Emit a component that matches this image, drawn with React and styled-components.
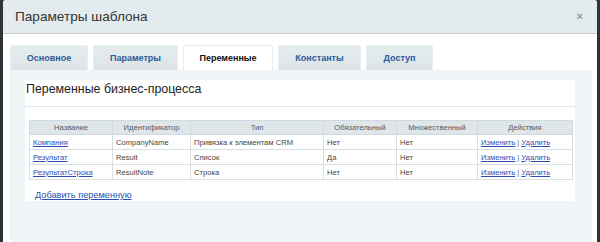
import React from "react";
import styled, { createGlobalStyle } from "styled-components";

const Global = createGlobalStyle`
  html, body { margin: 0; padding: 0; }
  body {
    background: #2f3437;
    font-family: "Liberation Sans", Arial, sans-serif;
    width: 600px;
    height: 242px;
    overflow: hidden;
  }
`;

const Dialog = styled.div`
  margin: 0 3px;
  height: 242px;
  background: #fff;
  border-radius: 3px 3px 0 0;
  overflow: hidden;
  display: flex;
  flex-direction: column;
`;

const Header = styled.div`
  height: 33px;
  flex: none;
  background: #e4ebee;
  border-bottom: 1px solid #c6ced2;
  display: flex;
  align-items: center;
  justify-content: space-between;
  padding: 0 14px 0 12px;
`;

const Title = styled.div`
  font-size: 13.6px;
  color: #333;
`;

const Close = styled.span`
  font-size: 11px;
  font-weight: bold;
  color: #8a9397;
  line-height: 1;
`;

const Body = styled.div`
  flex: 1;
  padding: 11px 5px 0 7px;
  display: flex;
  flex-direction: column;
`;

const Tabs = styled.div`
  display: flex;
  gap: 5px;
  height: 25px;
`;

const Tab = styled.div`
  width: ${(p) => p.$w}px;
  box-sizing: border-box;
  display: flex;
  align-items: center;
  justify-content: center;
  font-size: 9px;
  font-weight: bold;
  color: ${(p) => (p.$active ? "#111" : "#2c5a9c")};
  background: ${(p) =>
    p.$active ? "#fff" : "linear-gradient(#e5ecee, #dce4e7)"};
  border: 1px solid ${(p) => (p.$active ? "#e6ecee" : "#e9eef0")};
  border-bottom: none;
  border-radius: 2px 2px 0 0;
`;

const Panel = styled.div`
  flex: 1;
  background: #eff4f6;
  padding: 10px 17px 0 15px;
`;

const Card = styled.div`
  background: #fff;
  padding: 0 2px 8px 0;
  height: 113px;
`;

const Heading = styled.div`
  font-size: 12.4px;
  color: #222;
  line-height: 16px;
  padding: 1px 0 9px 1px;
  border-bottom: 1px solid #e3e9eb;
  margin-right: -2px;
`;

const Table = styled.table`
  margin: 13px 0 0 4px;
  border-collapse: collapse;
  width: 543px;
  table-layout: fixed;
  font-size: 7.6px;
  color: #444;
`;

const Th = styled.th`
  height: 13px;
  background: #dee6e9;
  border: 1px solid #cfd9de;
  font-weight: normal;
  color: #5a5a5a;
  text-align: center;
  padding: 0;
`;

const Td = styled.td`
  height: 14px;
  border: 1px solid #d6dfe3;
  padding: 0 0 0 3px;
  white-space: nowrap;
  overflow: hidden;
`;

const Link = styled.a`
  color: #2b4fb0;
  text-decoration: underline;
  cursor: pointer;
`;

const Sep = styled.span`
  color: #666;
  margin: 0 2px;
`;

const AddLink = styled.a`
  display: block;
  margin: 9px 0 0 10px;
  font-size: 9.2px;
  line-height: 12px;
  color: #2b4fb0;
  text-decoration: underline;
`;

const tabs = [
  { label: "Основное", w: 78 },
  { label: "Параметры", w: 85 },
  { label: "Переменные", w: 90, active: true },
  { label: "Константы", w: 83 },
  { label: "Доступ", w: 67 },
];

const cols = [
  ["Название", 83],
  ["Идентификатор", 78],
  ["Тип", 133],
  ["Обязательный", 73],
  ["Множественный", 81],
  ["Действия", 95],
];

const rows = [
  ["Компания", "CompanyName", "Привязка к элементам CRM", "Нет", "Нет"],
  ["Результат", "Result", "Список", "Да", "Нет"],
  ["РезультатСтрока", "ResultNote", "Строка", "Нет", "Нет"],
];

export default function App() {
  return (
    <>
      <Global />
      <Dialog>
        <Header>
          <Title>Параметры шаблона</Title>
          <Close>×</Close>
        </Header>
        <Body>
          <Tabs>
            {tabs.map((t) => (
              <Tab key={t.label} $active={t.active} $w={t.w}>
                {t.label}
              </Tab>
            ))}
          </Tabs>
          <Panel>
            <Card>
              <Heading>Переменные бизнес-процесса</Heading>
              <Table>
                <colgroup>
                  {cols.map(([c, w]) => (
                    <col key={c} style={{ width: w }} />
                  ))}
                </colgroup>
                <thead>
                  <tr>
                    {cols.map(([c]) => (
                      <Th key={c}>{c}</Th>
                    ))}
                  </tr>
                </thead>
                <tbody>
                  {rows.map((r) => (
                    <tr key={r[0]}>
                      <Td>
                        <Link>{r[0]}</Link>
                      </Td>
                      <Td>{r[1]}</Td>
                      <Td>{r[2]}</Td>
                      <Td>{r[3]}</Td>
                      <Td>{r[4]}</Td>
                      <Td>
                        <Link>Изменить</Link>
                        <Sep>|</Sep>
                        <Link>Удалить</Link>
                      </Td>
                    </tr>
                  ))}
                </tbody>
              </Table>
              <AddLink>Добавить переменную</AddLink>
            </Card>
          </Panel>
        </Body>
      </Dialog>
    </>
  );
}
